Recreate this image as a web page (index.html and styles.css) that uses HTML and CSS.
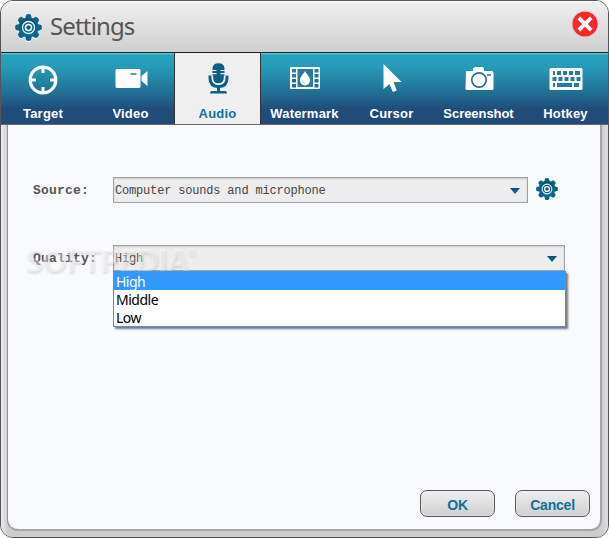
FILE: index.html
```
<!DOCTYPE html>
<html lang="en">
<head>
<meta charset="utf-8">
<title>Settings</title>
<link rel="stylesheet" href="styles.css">
</head>
<body>
<svg class="defs" width="0" height="0">
  <defs>
    <linearGradient id="teal" x1="0" y1="0" x2="0" y2="1"><stop offset="0" stop-color="#0b4d6b"/><stop offset="1" stop-color="#0b7299"/></linearGradient>
    <symbol id="gear" viewBox="-13 -13 26 26">
      <circle r="9.7" fill="url(#teal)"/>
      <g fill="#0c6389">
        <path id="tooth" d="M-3.3-8.5-2.3-12.3Q0-13.5 2.3-12.3L3.3-8.5z"/>
        <use href="#tooth" transform="rotate(45)"/><use href="#tooth" transform="rotate(90)"/>
        <use href="#tooth" transform="rotate(135)"/><use href="#tooth" transform="rotate(180)"/>
        <use href="#tooth" transform="rotate(225)"/><use href="#tooth" transform="rotate(270)"/>
        <use href="#tooth" transform="rotate(315)"/>
      </g>
      <circle r="5.8" fill="none" stroke="#e4f1f7" stroke-width="1.3"/>
      <circle r="2.9" fill="#0b6389" stroke="#fff" stroke-width="1.5"/>
    </symbol>
  </defs>
</svg>
<div class="window">
  <header class="titlebar">
    <svg class="logo" width="27" height="27"><use href="#gear"/></svg>
    <h1>Settings</h1>
    <button class="close" aria-label="Close"><svg width="28" height="28" viewBox="0 0 28 28"><circle cx="14" cy="14" r="13.3" fill="#fff" stroke="#bbb" stroke-width=".6"/><circle cx="14" cy="14" r="12.6" fill="#f8282b"/><path d="M7.800 7.800l12.400 12.400m0-12.400l-12.400 12.400" stroke="#fff" stroke-width="3.800"/></svg></button>
  </header>
  <nav class="tabs">
    <a class="tab first"><svg viewBox="0 0 34 34"><circle cx="17" cy="17" r="12.8" fill="none" stroke="#fff" stroke-width="3.2"/><path d="M17 5v5m0 14v5M5 17h5m14 0h5" stroke="#fff" stroke-width="3"/></svg><span>Target</span></a>
    <a class="tab"><svg viewBox="0 0 34 34"><path fill="#fff" d="M3 6h22q1.500 0 1.500 1.500v16q0 1.500-1.500 1.500H3Q1.500 25 1.500 23.500V7.500Q1.500 6 3 6zM27.500 13l6-5v15l-6-5z"/><path stroke="#277fa2" stroke-width="1.700" d="M16.500 11h6"/></svg><span>Video</span></a>
    <a class="tab active"><svg viewBox="0 0 34 34"><path fill="#0c6083" d="M11.500 6Q11.500.2 17.500.2t6 5.800v9q0 6-6 6t-6-6z"/><path d="M11 7.500h4.500m4 0H24M11 10.700h4.500m4 0H24" stroke="#eee" stroke-width="1.200"/><path d="M9 12.500v2.500q0 8.500 8.500 8.500t8.500-8.500v-2.500" fill="none" stroke="#0c6083" stroke-width="3"/><path d="M11.500 12.500v2q0 6.500 6 6.500t6-6.500v-2" fill="none" stroke="#eee" stroke-width="1.400"/><path fill="#0c6083" d="M16 23h3v5h5.500q1.500 0 1.500 2.500H9Q9 28 10.500 28H16z"/></svg><span>Audio</span></a>
    <a class="tab"><svg viewBox="0 0 34 34"><rect x="2" y="4" width="30" height="22" rx="1" fill="#fff"/><path fill="#267b9f" d="M4 6h4v3.500H4zM26.500 6h4v3.500h-4zM4 11h4v3.500H4zM26.500 11h4v3.500h-4zM9.500 6h15.500v18H9.500z"/><path fill="#246b95" d="M4 16h4v3.500H4zM26.500 16h4v3.500h-4zM4 21h4v3.500H4zM26.500 21h4v3.500h-4z"/><path fill="#fff" d="M17 8C15.500 11.500 12 13 12 17.500a5 5 0 0 0 10 0C22 13 18.500 11.500 17 8z"/><path d="M14.500 17q0 3 2.500 3.500" fill="none" stroke="#a9cbdc" stroke-width="1"/></svg><span>Watermark</span></a>
    <a class="tab"><svg viewBox="0 0 34 34"><path fill="#fff" d="M8.500 1v25l6-5 3.300 8 4-1.500-3.300-8.500h8z"/></svg><span>Cursor</span></a>
    <a class="tab"><svg viewBox="0 0 34 34"><path fill="#fff" d="M4 8h7V5.500Q12 4 14 4h6q2 0 2 1.500V8h8q1.500 0 1.500 1.500V25.500q0 1.500-1.500 1.500H5Q3.500 27 3.500 25.500z"/><circle cx="17" cy="17" r="7.200" fill="#fff" stroke="#25719a" stroke-width="1.700"/><path d="M25 12h4" stroke="#25719a" stroke-width="1.700"/></svg><span class="long">Screenshot</span></a>
    <a class="tab"><svg viewBox="0 0 34 34"><rect x=".5" y="5" width="33" height="22" rx="1.500" fill="#fff"/><path d="M4 10h2m2 0h4m2 0h4m2 0h4m2 0h5M3.500 16h4m2 0h4m2 0h4m2 0h4m2 0h4M4 22h2m2 0h15m2 0h5" stroke="#257aa0" stroke-width="4"/></svg><span>Hotkey</span></a>
  </nav>
  <main class="frame">
    <section class="panel">
      <div class="row source">
        <label>Source:</label>
        <div class="select"><span>Computer sounds and microphone</span><svg width="10" height="6"><path d="M0 0h10L5 6z" fill="url(#teal)"/></svg></div>
        <svg class="gear" width="22" height="22"><use href="#gear"/></svg>
      </div>
      <div class="row quality">
        <label>Quality:</label>
        <div class="select"><span>High</span><svg width="10" height="6"><path d="M0 0h10L5 6z" fill="url(#teal)"/></svg>
          <ul class="menu"><li class="selected">High</li><li>Middle</li><li>Low</li></ul>
        </div>
        <div class="watermark">SOFTPEDIA<sup>®</sup></div>
      </div>
      <footer><button>OK</button><button>Cancel</button></footer>
    </section>
  </main>
</div>
</body>
</html>
```
FILE: styles.css
```
* { box-sizing: border-box; }
body { margin: 0; background: #fff; font-family: "Liberation Sans", sans-serif; }
.defs { position: absolute; }
.window { width: 609px; height: 538px; display: flex; flex-direction: column; border: 1px solid #55545b; border-radius: 13px; background: #d4d4d4; overflow: hidden; }
.titlebar { height: 52px; flex: none; display: flex; align-items: center; padding: 1px 9px 0 14px; background: linear-gradient(#f0f0f0, #cfcfcf); border-bottom: 1px solid #222; box-shadow: inset 0 1px #fff; }
.logo { filter: drop-shadow(0 1px 0 #fff); }
h1 { margin: 0 0 2px 8px; font: 24px/32px "Noto Sans", sans-serif; color: #555; letter-spacing: -.85px; }
.close { margin: -7px 0 0 auto; padding: 0; width: 28px; height: 28px; border: 0; background: none; }
.tabs { height: 72px; flex: none; display: grid; grid-template-columns: repeat(7, 87px); margin: 0 -1px; background: linear-gradient(#64cce0 0, #25a3bd 2px, #259bb7 14px, #216b93 42px, #214b79 56px, #214b79); border-bottom: 1px solid #666; }
.tab { display: flex; flex-direction: column; align-items: center; padding-top: 10px; color: #fff; font-size: 13px; line-height: 16px; font-weight: bold; letter-spacing: .2px; }
.tab svg { width: 34px; height: 34px; display: block; flex: none; margin-left: 1px; }
.tab.first svg { margin-left: -1px; }
.tab span { margin-top: 9px; }
.tab.first span { margin-left: -1px; }
.tab span.long { letter-spacing: -.05px; }
.tab.active { background: #efefef; color: #126f9c; border: 1px solid #333; border-width: 0 1px; }
.frame { flex: 1; padding: 0 6px 6px; background: linear-gradient(90deg, #eee, #ccc 7px, #ccc 600px, #ddd); }
.panel { height: 100%; display: flex; flex-direction: column; background: #f9fafc; border: 1px solid #929297; border-width: 0 2px 2px 1px; border-color: #929297 #a5a5aa #a5a5aa #929297; border-radius: 0 0 11px 11px; padding: 52px 10px 12px 25px; }
.row { display: flex; position: relative; align-items: center; height: 26px; }
.quality { margin-top: 42px; }
label { width: 80px; flex: none; font: bold 13px "Liberation Mono", monospace; color: #555; letter-spacing: .2px; }
.select { position: relative; display: flex; align-items: center; justify-content: space-between; width: 415px; height: 26px; padding: 1px 7px 0 1px; background: #ededed; border: 1px solid #a0a0a7; box-shadow: inset 0 1px 2px #ccc; font: 12px "Liberation Mono", monospace; letter-spacing: -.18px; color: #444; }
.select > span { margin-top: 1px; }
.quality .select { width: 452px; }
.gear { margin: -2px 0 0 8px; }
.menu { position: absolute; z-index: 2; left: -1px; top: 25px; width: 453px; height: 56px; margin: 0; padding: 0; list-style: none; background: #fff; border: 1px solid #4b91d9; border-top: 0; box-shadow: 2px 2px 2px #777; font: 14px/18px "Noto Sans", sans-serif; letter-spacing: -.5px; color: #000; }
.menu li { height: 18px; padding: 1px 0 0 2px; }
.menu .selected { height: 19px; background: #3399ff; color: #fff; margin: 0 -1px; padding: 2px 0 0 3px; }
.watermark { position: absolute; left: -8px; top: -3px; font: bold 33px/36px "Open Sans", sans-serif; letter-spacing: -1.85px; color: rgba(255,255,255,.4); text-shadow: 1px 2px 2px rgba(100,100,100,.17); }
.watermark sup { font-size: 10px; line-height: 0; vertical-align: 16px; }
footer { margin-top: auto; display: flex; justify-content: flex-end; gap: 20px; }
footer button { width: 75px; height: 27px; padding: 2px 0 0; border: 1px solid #55555c; border-radius: 7px; background: linear-gradient(#eee, #d0d0d0); box-shadow: inset 0 0 0 1px #eee8; font: bold 14px/20px "Liberation Sans", sans-serif; letter-spacing: -.2px; color: #126f9c; }
```
